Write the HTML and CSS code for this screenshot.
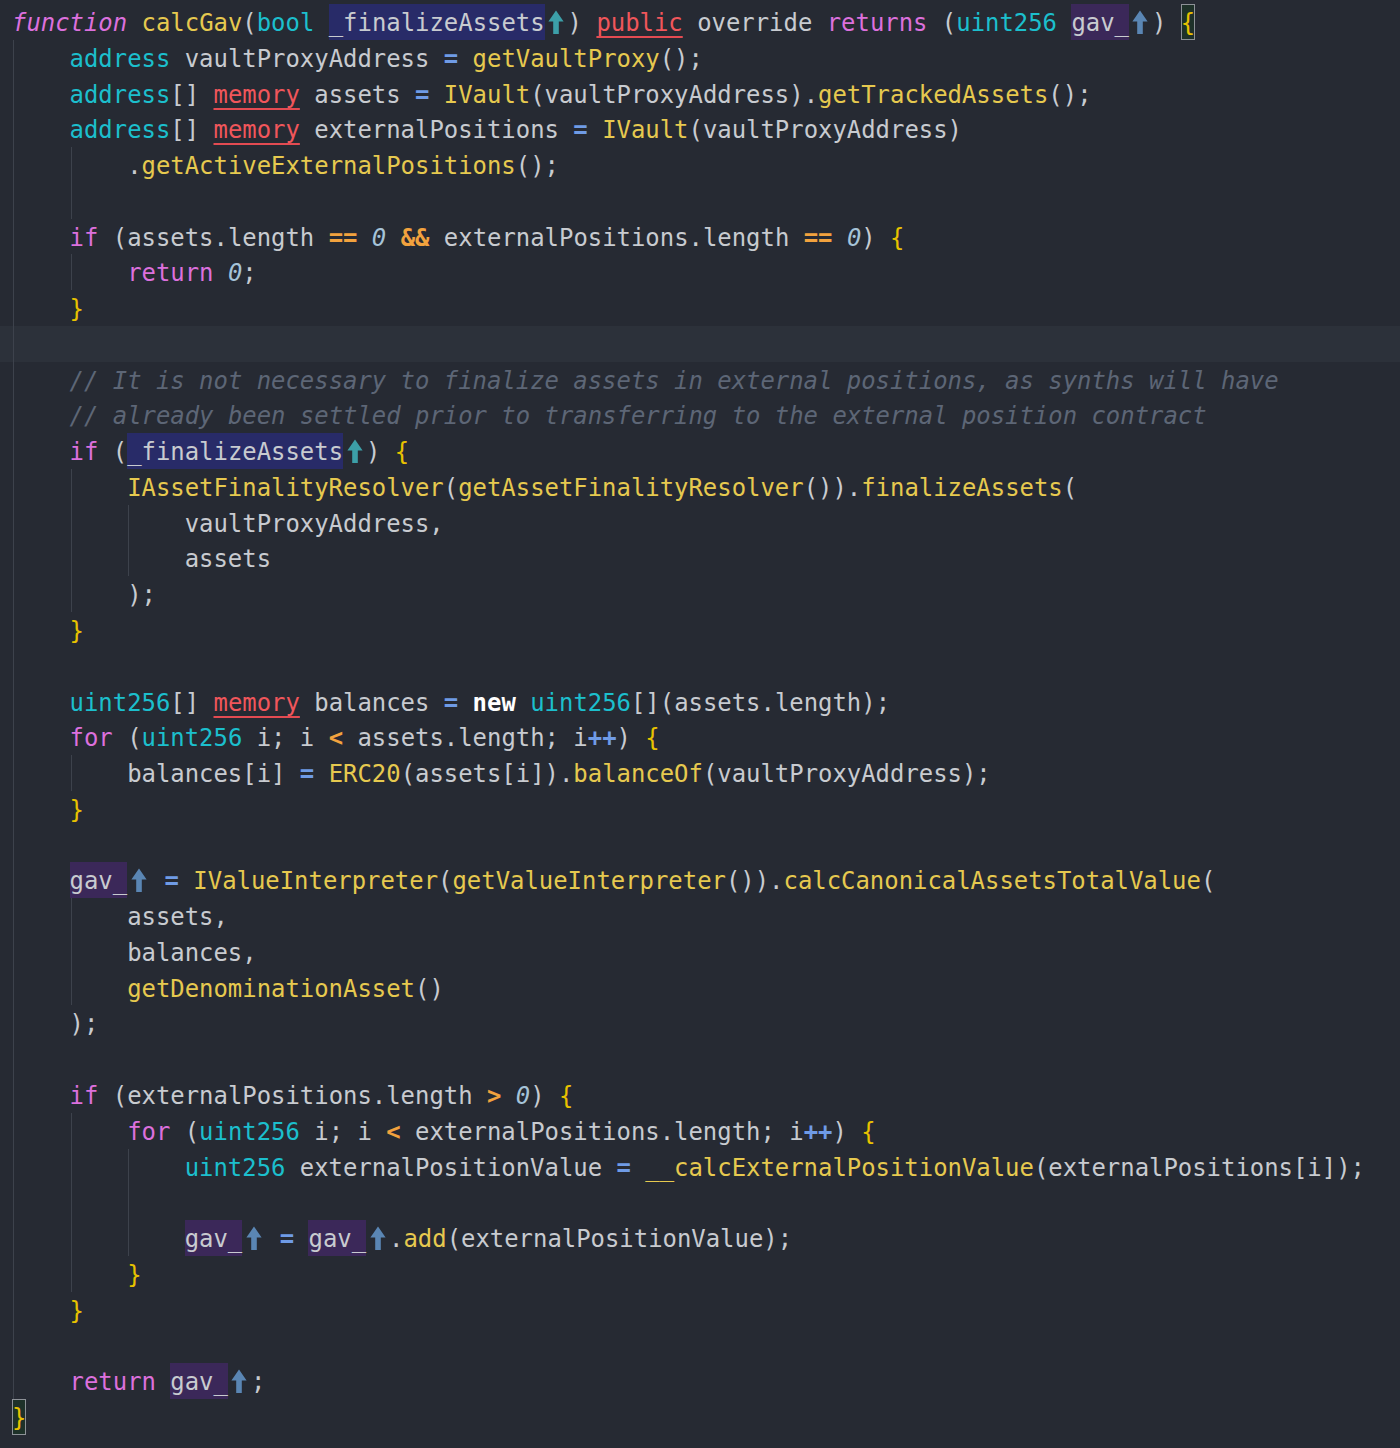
FILE: index.html
```html
<!DOCTYPE html>
<html>
<head>
  <meta charset="utf-8">
  <title>calcGav</title>
  <link rel="stylesheet" href="styles.css">
</head>
<body>
  <svg class="defs" aria-hidden="true">
    <symbol id="up" viewBox="0 0 16 24">
      <path d="M8 0.5 L15.6 11.5 L10.8 11.5 L10.8 24 L5.2 24 L5.2 11.5 L0.4 11.5 Z"/>
    </symbol>
  </svg>

  <div class="code">
<div class="ln"><span class="kw it">function</span> <span class="fn">calcGav</span>(<span class="ty">bool</span> <span class="pv">_finalizeAssets</span><span class="hint p"><svg><use href="#up"/></svg></span>) <span class="st">public</span> override <span class="kw">returns</span> (<span class="ty">uint256</span> <span class="rv">gav_</span><span class="hint r"><svg><use href="#up"/></svg></span>) <span class="br match">{</span></div>
<div class="ln"><span class="in g"></span><span class="ty">address</span> vaultProxyAddress <span class="op">=</span> <span class="fn">getVaultProxy</span>();</div>
<div class="ln"><span class="in g"></span><span class="ty">address</span>[] <span class="st">memory</span> assets <span class="op">=</span> <span class="fn">IVault</span>(vaultProxyAddress).<span class="fn">getTrackedAssets</span>();</div>
<div class="ln"><span class="in g"></span><span class="ty">address</span>[] <span class="st">memory</span> externalPositions <span class="op">=</span> <span class="fn">IVault</span>(vaultProxyAddress)</div>
<div class="ln"><span class="in g"></span><span class="in g"></span>.<span class="fn">getActiveExternalPositions</span>();</div>
<div class="ln"><span class="in g"></span><span class="in g"></span></div>
<div class="ln"><span class="in g"></span><span class="kw">if</span> (assets.length <span class="cmp">==</span> <span class="num">0</span> <span class="cmp">&amp;&amp;</span> externalPositions.length <span class="cmp">==</span> <span class="num">0</span>) <span class="br">{</span></div>
<div class="ln"><span class="in g"></span><span class="in g"></span><span class="kw">return</span> <span class="num">0</span>;</div>
<div class="ln"><span class="in g"></span><span class="br">}</span></div>
<div class="ln cur"><span class="in g"></span></div>
<div class="ln"><span class="in g"></span><span class="cm">// It is not necessary to finalize assets in external positions, as synths will have</span></div>
<div class="ln"><span class="in g"></span><span class="cm">// already been settled prior to transferring to the external position contract</span></div>
<div class="ln"><span class="in g"></span><span class="kw">if</span> (<span class="pv">_finalizeAssets</span><span class="hint p"><svg><use href="#up"/></svg></span>) <span class="br">{</span></div>
<div class="ln"><span class="in g"></span><span class="in g"></span><span class="fn">IAssetFinalityResolver</span>(<span class="fn">getAssetFinalityResolver</span>()).<span class="fn">finalizeAssets</span>(</div>
<div class="ln"><span class="in g"></span><span class="in g"></span><span class="in g"></span>vaultProxyAddress,</div>
<div class="ln"><span class="in g"></span><span class="in g"></span><span class="in g"></span>assets</div>
<div class="ln"><span class="in g"></span><span class="in g"></span>);</div>
<div class="ln"><span class="in g"></span><span class="br">}</span></div>
<div class="ln"><span class="in g"></span></div>
<div class="ln"><span class="in g"></span><span class="ty">uint256</span>[] <span class="st">memory</span> balances <span class="op">=</span> <span class="new">new</span> <span class="ty">uint256</span>[](assets.length);</div>
<div class="ln"><span class="in g"></span><span class="kw">for</span> (<span class="ty">uint256</span> i; i <span class="cmp">&lt;</span> assets.length; i<span class="op">++</span>) <span class="br">{</span></div>
<div class="ln"><span class="in g"></span><span class="in g"></span>balances[i] <span class="op">=</span> <span class="fn">ERC20</span>(assets[i]).<span class="fn">balanceOf</span>(vaultProxyAddress);</div>
<div class="ln"><span class="in g"></span><span class="br">}</span></div>
<div class="ln"><span class="in g"></span></div>
<div class="ln"><span class="in g"></span><span class="rv">gav_</span><span class="hint r"><svg><use href="#up"/></svg></span> <span class="op">=</span> <span class="fn">IValueInterpreter</span>(<span class="fn">getValueInterpreter</span>()).<span class="fn">calcCanonicalAssetsTotalValue</span>(</div>
<div class="ln"><span class="in g"></span><span class="in g"></span>assets,</div>
<div class="ln"><span class="in g"></span><span class="in g"></span>balances,</div>
<div class="ln"><span class="in g"></span><span class="in g"></span><span class="fn">getDenominationAsset</span>()</div>
<div class="ln"><span class="in g"></span>);</div>
<div class="ln"><span class="in g"></span></div>
<div class="ln"><span class="in g"></span><span class="kw">if</span> (externalPositions.length <span class="cmp">&gt;</span> <span class="num">0</span>) <span class="br">{</span></div>
<div class="ln"><span class="in g"></span><span class="in g"></span><span class="kw">for</span> (<span class="ty">uint256</span> i; i <span class="cmp">&lt;</span> externalPositions.length; i<span class="op">++</span>) <span class="br">{</span></div>
<div class="ln"><span class="in g"></span><span class="in g"></span><span class="in g"></span><span class="ty">uint256</span> externalPositionValue <span class="op">=</span> <span class="fn">__calcExternalPositionValue</span>(externalPositions[i]);</div>
<div class="ln"><span class="in g"></span><span class="in g"></span><span class="in g"></span></div>
<div class="ln"><span class="in g"></span><span class="in g"></span><span class="in g"></span><span class="rv">gav_</span><span class="hint r"><svg><use href="#up"/></svg></span> <span class="op">=</span> <span class="rv">gav_</span><span class="hint r"><svg><use href="#up"/></svg></span>.<span class="fn">add</span>(externalPositionValue);</div>
<div class="ln"><span class="in g"></span><span class="in g"></span><span class="br">}</span></div>
<div class="ln"><span class="in g"></span><span class="br">}</span></div>
<div class="ln"><span class="in g"></span></div>
<div class="ln"><span class="in g"></span><span class="kw">return</span> <span class="rv">gav_</span><span class="hint r"><svg><use href="#up"/></svg></span>;</div>
<div class="ln"><span class="br match">}</span></div>
  </div>
</body>
</html>
```

FILE: styles.css
```css
html,
body {
  margin: 0;
  background-color: #262a33;
}
.defs {
  position: absolute;
  width: 0;
  height: 0;
}
.code {
  font-family: "DejaVu Sans Mono", "Liberation Mono", monospace;
  font-size: 23.92px;
  color: #c8cbd0;
  padding-top: 4px;
  height: 1444px;
  overflow: hidden;
}
/* taller line-height than the row so glyphs sit a little lower, like the editor */
.ln {
  height: 35.77px;
  line-height: 39.5px;
  padding-left: 12px;
  white-space: pre;
}
.ln.cur {
  background-color: #2c313a;
}
.in {
  display: inline-block;
  width: 4ch;
  height: 35.77px;
  vertical-align: top;
}
.in.g {
  background: linear-gradient(#3d424c, #3d424c) 1px 0 / 1px 100% no-repeat;
}
.kw {
  color: #dc70dd;
}
.it {
  font-style: italic;
}
.fn {
  color: #e6c94f;
}
.ty {
  color: #1cbfcd;
}
.st {
  color: #f0565b;
  text-decoration: underline;
  text-decoration-color: #e34b52;
  text-decoration-thickness: 2px;
  text-underline-offset: 5px;
}
.op {
  color: #6f9be6;
  font-weight: bold;
}
.cmp {
  color: #f2a23e;
  font-weight: bold;
}
.num {
  color: #a5c3d8;
  font-style: italic;
}
.cm {
  color: #5d6676;
  font-style: italic;
}
.br {
  color: #e8c200;
}
.new {
  color: #ffffff;
  font-weight: bold;
}
.pv,
.rv {
  display: inline-block;
  vertical-align: top;
  height: 35.77px;
}
.pv {
  background-color: #282b68;
}
.rv {
  background-color: #3b2859;
}
.hint {
  display: inline-block;
  width: 23px;
  height: 35.77px;
  vertical-align: top;
}
.hint svg {
  display: block;
  width: 16px;
  height: 24px;
  margin: 5.5px 0 0 3.5px;
  fill: currentColor;
}
.hint.p {
  color: #3c9fa8;
}
.hint.r {
  color: #5a86b4;
}
.match {
  display: inline-block;
  vertical-align: top;
  height: 35.77px;
  background-color: #1e3129;
  box-shadow: inset 0 0 0 1px #8d9197;
}
```
